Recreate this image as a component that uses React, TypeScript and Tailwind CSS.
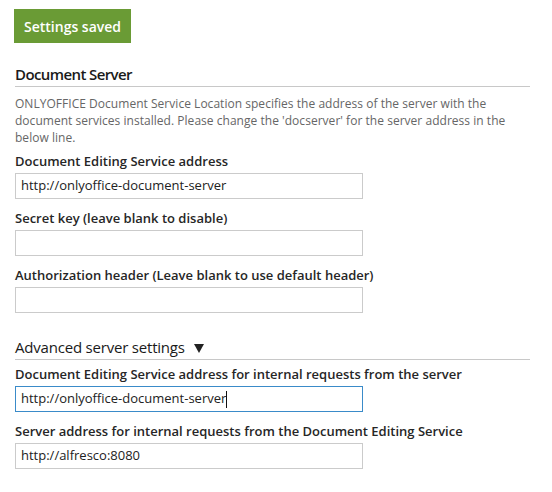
import React from "react";

const Label = ({ children, mt = "mt-[10px]" }: { children: React.ReactNode; mt?: string }) => (
  <div className={mt + " text-[13px] font-semibold text-[#262626] leading-[18px]"}>{children}</div>
);

const Field = ({ value, focused }: { value?: string; focused?: boolean }) => (
  <div
    className={
      "mt-[3px] w-[348px] h-[26px] flex items-center px-[5px] text-[13px] text-[#222] bg-white border " +
      (focused ? "border-[#3a8bc9]" : "border-[#cbcbcb]")
    }
  >
    {value}
    {focused && <span className="inline-block w-[1px] h-[17px] bg-[#111]" />}
  </div>
);

export default function App() {
  return (
    <div
      className="w-[552px] h-[492px] bg-white pl-[15px] pr-[22px] pt-[9px]"
      style={{ fontFamily: '"Open Sans", sans-serif' }}
    >
      <div className="ml-[-1px] inline-flex items-center h-[34px] px-[10px] bg-[#6a9b35] text-white text-[14px] font-semibold">
        Settings saved
      </div>
      <div className="mt-[21px] text-[15px] font-semibold tracking-[-0.6px] text-[#1a1a1a] leading-[20px]">
        Document Server
      </div>
      <div className="mt-[2px] border-t border-[#c8c8c8]" />
      <p className="mt-[8px] text-[12px] tracking-[0.03px] leading-[17px] text-[#666]">
        ONLYOFFICE Document Service Location specifies the address of the server with the document services installed. Please change the 'docserver' for the server address in the below line.
      </p>
      <Label mt="mt-[6px]">Document Editing Service address</Label>
      <Field value="http://onlyoffice-document-server" />
      <Label>Secret key (leave blank to disable)</Label>
      <Field />
      <Label>Authorization header (Leave blank to use default header)</Label>
      <Field />
      <div className="mt-[24px] text-[15px] tracking-[-0.2px] text-[#1a1a1a] leading-[20px] flex items-center">
        <span>Advanced server settings</span>
        <svg className="ml-[9px] mt-[2px]" width="10" height="9" viewBox="0 0 10 9">
          <polygon points="0,0 10,0 5,9" fill="#222" />
        </svg>
      </div>
      <div className="mt-[2px] border-t border-[#c8c8c8]" />
      <Label mt="mt-[5px]">Document Editing Service address for internal requests from the server</Label>
      <Field value="http://onlyoffice-document-server" focused />
      <Label>Server address for internal requests from the Document Editing Service</Label>
      <Field value="http://alfresco:8080" />
    </div>
  );
}
